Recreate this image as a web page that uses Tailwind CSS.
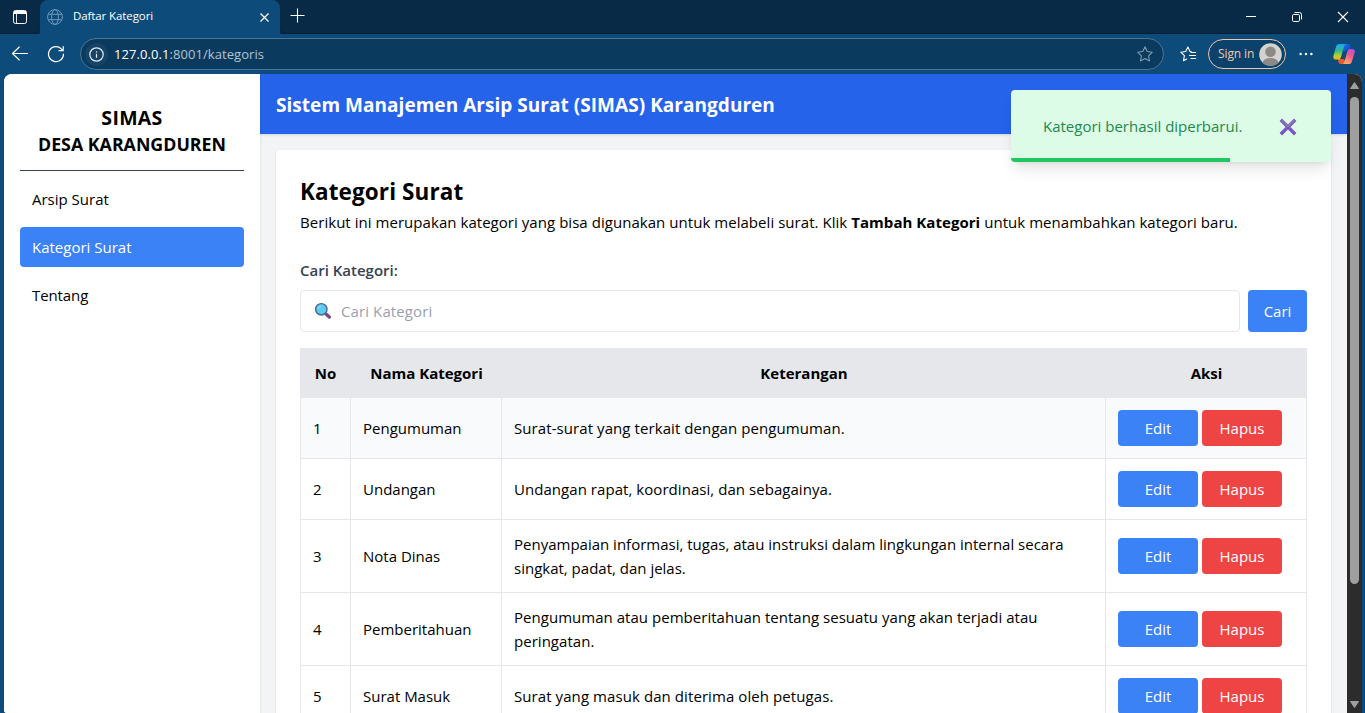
<!DOCTYPE html>
<html lang="id">
<head>
<meta charset="utf-8">
<title>Daftar Kategori</title>
<script src="https://cdn.jsdelivr.net/npm/@tailwindcss/browser@4"></script>
</head>
<body class="h-[713px] w-[1365px] overflow-hidden bg-[#0c4b7a] font-['Open_Sans','Noto_Sans',sans-serif] text-[15px] leading-6 text-black">
<div class="flex h-[713px] flex-col">
  <!-- Tab strip -->
  <div class="flex h-[34px] shrink-0 bg-[#082a46]">
    <div class="flex w-10 items-center justify-center rounded-br-md border-b border-[#061f35]">
      <svg class="h-4 w-4" viewBox="0 0 16 16" fill="none" stroke="#fff" stroke-width="1"><rect x="1.500" y="1.500" width="13" height="13" rx="2"/><path d="M2 3.500h12" stroke-width="3"/><path d="M4.500 4v10" stroke-opacity=".85"/></svg>
    </div>
    <div class="flex w-60 items-center rounded-t-lg bg-[#0c4b7a] pl-[7px] pr-[9px]">
      <svg class="h-4 w-4" viewBox="0 0 16 16" fill="none" stroke="#6f99bb" stroke-width="1"><circle cx="8" cy="8" r="7.4"/><ellipse cx="8" cy="8" rx="3.4" ry="7.4"/><path d="M1.3 5.3h13.4M1.3 10.7h13.4"/></svg>
      <span class="ml-[10px] flex-1 -translate-y-px whitespace-nowrap text-[11.5px] tracking-[-0.1px] leading-4 text-white">Daftar Kategori</span>
      <svg class="h-[13px] w-[13px]" viewBox="0 0 13 13" stroke="#fff" stroke-width="1.2"><path d="M2.5 2.5l8 8M10.5 2.5l-8 8"/></svg>
    </div>
    <div class="flex flex-1 items-center rounded-bl-md border-b border-[#061f35] pl-[10px]">
      <svg class="mb-0.5 h-[15px] w-[15px]" viewBox="0 0 15 15" stroke="#fff" stroke-width="1.1"><path d="M7.5 .5v14M.5 7.5h14"/></svg>
      <div class="ml-auto flex items-center pr-4">
        <svg class="mr-[35px] h-[12px] w-[10px]" viewBox="0 0 10 12" stroke="#fff"><path d="M0 5.5h10"/></svg>
        <svg class="mr-[34px] h-[12px] w-[12px]" viewBox="0 0 12 12" fill="none" stroke="#fff"><rect x="1.5" y="3.5" width="7" height="7" rx="1.2"/><path d="M3.5 1.5h5a2 2 0 0 1 2 2v5"/></svg>
        <svg class="h-[12px] w-[12px]" viewBox="0 0 12 12" stroke="#fff" stroke-width="1.1"><path d="M1 1l10 10M11 1L1 11"/></svg>
      </div>
    </div>
  </div>
  <!-- Toolbar -->
  <div class="flex h-10 shrink-0 items-center">
    <svg class="ml-[11px] h-[18px] w-[18px]" viewBox="0 0 18 18" fill="none" stroke="#fff" stroke-width="1.1" stroke-linecap="round" stroke-linejoin="round"><path d="M16.500 8.500H1.500M8.300 2L1.500 8.500l6.800 6.500"/></svg>
    <svg class="ml-[18px] h-[18px] w-[18px]" viewBox="0 0 18 18" fill="none" stroke="#fff" stroke-width="1.2" stroke-linecap="round" stroke-linejoin="round"><path d="M16.500 9A7.500 7.500 0 1 1 14.300 3.800L16 5.500M16.200 1.500V5.700h-4.200"/></svg>
    <div class="ml-[15px] flex h-8 w-[1084px] items-center rounded-full border border-[#4c7594] bg-[#0a3a5e] pl-[4px] pr-[10px]">
      <div class="flex h-[23px] w-[23px] items-center justify-center rounded-full bg-[#164466]">
        <svg class="h-[15px] w-[15px]" viewBox="0 0 15 15" fill="none" stroke="#e7edf2" stroke-width="1.2"><circle cx="7.5" cy="7.5" r="6.7"/><path d="M7.5 6.8v3.9M7.5 4.2v1.3"/></svg>
      </div>
      <span class="ml-[6px] flex-1 whitespace-nowrap text-[13px] tracking-[0.07px] text-[#b4c3d0]"><span class="text-white">127.0.0.1</span>:8001/kategoris</span>
      <svg class="h-4 w-4" viewBox="0 0 16 16" fill="none" stroke="#8299ab" stroke-width="1.1" stroke-linejoin="round"><path d="M8 .8l2.2 4.7 5.1.7-3.7 3.6.9 5.2L8 12.5 3.5 15l.9-5.2L.7 6.2l5.1-.7z"/></svg>
    </div>
    <svg class="ml-[16px] h-4 w-[17px]" viewBox="0 0 17 16" fill="none" stroke="#fff" stroke-width="1.1" stroke-linejoin="round" stroke-linecap="round"><path d="M11.200 5.600L10 5.400 7.900 1 5.700 5.500.8 6.200l3.600 3.500-.9 5 3.200-1.700M11 6.500h4.700M9.500 9.500h6.200M11 12.500h4.700"/></svg>
    <div class="ml-[11px] flex h-[30px] w-[78px] items-center rounded-full border border-[#f4c6a4] bg-[#0b426c] pl-[9px]">
      <span class="whitespace-nowrap text-[12px] tracking-[-0.1px] text-[#f4c6a4]">Sign in</span>
      <svg class="ml-auto mr-[3px] h-[23px] w-[23px]" viewBox="0 0 23 23"><defs><clipPath id="av"><circle cx="11.5" cy="11.5" r="11.3"/></clipPath></defs><circle cx="11.5" cy="11.5" r="11.3" fill="#d5d3d1"/><g clip-path="url(#av)" fill="#8c8986"><circle cx="11.5" cy="8.7" r="5.3"/><ellipse cx="11.5" cy="20" rx="8" ry="5"/></g></svg>
    </div>
    <svg class="ml-[13px] h-4 w-[14px]" viewBox="0 0 14 16" fill="#fff"><circle cx="1.6" cy="8" r="1.25"/><circle cx="7" cy="8" r="1.25"/><circle cx="12.4" cy="8" r="1.25"/></svg>
    <svg class="ml-[20px] h-[22px] w-[22px]" viewBox="0 0 22 22">
      <defs>
        <linearGradient id="c1" x1="0" y1="0" x2="0" y2="1"><stop stop-color="#19a5f1"/><stop offset=".45" stop-color="#35bb8d"/><stop offset=".75" stop-color="#b8cf28"/><stop offset="1" stop-color="#f4b41b"/></linearGradient>
        <linearGradient id="c2" x1="1" y1="0" x2=".4" y2="1"><stop stop-color="#ac50e9"/><stop offset=".5" stop-color="#ee5a8a"/><stop offset="1" stop-color="#ffa566"/></linearGradient>
        <linearGradient id="c3" x1="0" y1="0" x2="1" y2=".6"><stop stop-color="#1b8cf0"/><stop offset="1" stop-color="#1243c4"/></linearGradient>
      </defs>
      <path d="M6 1h9c1.300 0 1.900.8 2.300 2.100L18.300 6.500h-4L11 9z" fill="url(#c3)"/>
      <path d="M16 21H8c-1.500 0-2.200-.8-2.500-2L5 16h5.500z" fill="#f4562e"/>
      <path d="M6 1h7c-1.300.4-1.800 1.700-2.300 3.500L8 14c-.5 1.700-1.300 2.600-3 2.600H3.200C.8 16.600-.1 15 .4 12.900L3 3.800C3.600 1.900 4.400 1 6 1z" fill="url(#c1)"/>
      <path d="M16 21H9.500c1.300-.4 1.800-1.700 2.300-3.500L14.300 8.500c.5-1.700 1.200-2.500 2.900-2.500h1.800c2.400 0 3.200 1.500 2.700 3.500L19 18.200C18.400 20.100 17.600 21 16 21z" fill="url(#c2)"/>
    </svg>
  </div>
  <!-- Page -->
  <div class="ml-1 mr-[3px] flex min-h-0 flex-1 overflow-hidden rounded-t-lg rounded-bl-[3px] bg-gray-100">
    <aside class="z-10 w-64 shrink-0 bg-white p-4 shadow-sm">
      <div class="border-b border-gray-700 pb-3 pt-[14px] text-center text-[19.500px] font-bold leading-[27px]">
        <div class="tracking-[0.3px]">SIMAS</div>
        <div class="whitespace-nowrap text-[17.800px]">DESA KARANGDUREN</div>
      </div>
      <nav class="mt-2 flex flex-col gap-2">
        <a class="rounded px-3 py-2">Arsip Surat</a>
        <a class="rounded bg-[#3b82f6] px-3 py-2 text-white">Kategori Surat</a>
        <a class="rounded px-3 py-2 tracking-[-0.1px]">Tentang</a>
      </nav>
    </aside>
    <main class="relative w-[1087px] shrink-0">
      <header class="flex h-[60px] items-center bg-[#2563eb] px-4 shadow"><h1 class="whitespace-nowrap pt-0.5 text-[19px] font-bold tracking-[0.04px] text-white">Sistem Manajemen Arsip Surat (SIMAS) Karangduren</h1></header>
      <div class="p-4">
        <section class="h-[700px] rounded bg-white p-6 shadow">
          <h2 class="whitespace-nowrap text-[22.500px] font-bold leading-9 tracking-[0.1px]">Kategori Surat</h2>
          <p class="whitespace-nowrap tracking-[0.044px]">Berikut ini merupakan kategori yang bisa digunakan untuk melabeli surat. Klik <b>Tambah Kategori</b> untuk menambahkan kategori baru.</p>
          <label class="mt-6 block font-semibold text-gray-700">Cari Kategori:</label>
          <div class="mt-2 flex gap-2">
            <div class="flex h-[42px] w-[940px] items-center rounded border border-gray-200 pl-[13px]">
              <svg class="h-[18px] w-[18px]" viewBox="0 0 18 18"><path d="M10.500 10.500l2 2" stroke="#544f7e" stroke-width="2"/><path d="M12.300 12.300l3 2.700" stroke="#7d4688" stroke-width="3.400" stroke-linecap="round"/><circle cx="7.300" cy="7.300" r="5.700" fill="#5ccbed" stroke="#4a6592" stroke-width="1.400"/><path d="M4 7.500A3.500 3.500 0 0 1 7.500 4" fill="none" stroke="#91e4f8" stroke-width="1"/></svg>
              <span class="ml-[9px] whitespace-nowrap tracking-[0.1px] text-gray-400">Cari Kategori</span>
            </div>
            <button class="h-[42px] w-[59px] rounded bg-[#3b82f6] text-white">Cari</button>
          </div>
          <table class="mt-4 w-[1007px] table-fixed border-separate border-spacing-0">
            <colgroup><col class="w-[51px]"><col class="w-[151px]"><col class="w-[604px]"><col class="w-[201px]"></colgroup>
            <thead><tr class="h-[50px] bg-gray-200 font-bold"><th>No</th><th>Nama Kategori</th><th>Keterangan</th><th>Aksi</th></tr></thead>
            <tbody id="rows"></tbody>
          </table>
        </section>
      </div>
      <!-- Toast -->
      <div class="absolute right-4 top-4 flex h-[72px] w-80 items-center overflow-hidden rounded bg-[#dcfce7] pl-8 shadow-lg">
        <span class="whitespace-nowrap text-[#21894d]">Kategori berhasil diperbarui.</span>
        <svg class="ml-auto mr-[34px] mt-px h-[18px] w-[18px]" viewBox="0 0 18 18" stroke-linecap="square"><path d="M3 3l12 12M15 3l-12 12" stroke="#7a55c4" stroke-width="3.400"/><path d="M3 2.500l6 6 6-6" fill="none" stroke="#8a7fae" stroke-width="1.400"/></svg>
        <div class="absolute bottom-0 left-0 h-1 w-[219px] bg-[#22c55e]"></div>
      </div>
    </main>
    <!-- Scrollbar -->
    <div class="flex w-[15px] flex-col items-center bg-[#2c2c2c] pt-[8px]">
      <svg class="h-[7px] w-[9px]" viewBox="0 0 9 7"><path d="M4.500 .5L8.500 6.500h-8z" fill="#9f9f9f" stroke="#9f9f9f" stroke-linejoin="round"/></svg>
      <div class="mt-2 h-[487px] w-[9px] rounded-full bg-[#9f9f9f]"></div>
      <svg class="mb-[5px] mt-auto h-[7px] w-[9px]" viewBox="0 0 9 7"><path d="M4.500 6.500L8.500 .5h-8z" fill="#9f9f9f" stroke="#9f9f9f" stroke-linejoin="round"/></svg>
    </div>
  </div>
</div>
<script>
const rows = [
  ["Pengumuman", "Surat-surat yang terkait dengan pengumuman.", "tracking-[0.08px]"],
  ["Undangan", "Undangan rapat, koordinasi, dan sebagainya.", "tracking-[0.05px]"],
  ["Nota Dinas", "Penyampaian informasi, tugas, atau instruksi dalam lingkungan internal secara<br>singkat, padat, dan jelas.", "tracking-normal"],
  ["Pemberitahuan", "Pengumuman atau pemberitahuan tentang sesuatu yang akan terjadi atau<br>peringatan.", "tracking-[0.03px]"],
  ["Surat Masuk", "Surat yang masuk dan diterima oleh petugas.", "tracking-[0.08px]"]
];
document.getElementById("rows").innerHTML = rows.map(([n, k, t], i) => `
<tr class="${i ? "" : "bg-gray-50"}">
<td class="border-x border-b border-gray-200 p-3">${i + 1}</td>
<td class="border-r border-b border-gray-200 p-3 whitespace-nowrap">${n}</td>
<td class="border-r border-b border-gray-200 p-3 whitespace-nowrap"><span class="${t}">${k}</span></td>
<td class="border-r border-b border-gray-200 p-3"><div class="flex gap-1"><button class="h-9 w-20 rounded bg-[#3b82f6] text-white">Edit</button><button class="h-9 w-20 rounded bg-[#ef4444] text-white">Hapus</button></div></td>
</tr>`).join("");
</script>
</body>
</html>
